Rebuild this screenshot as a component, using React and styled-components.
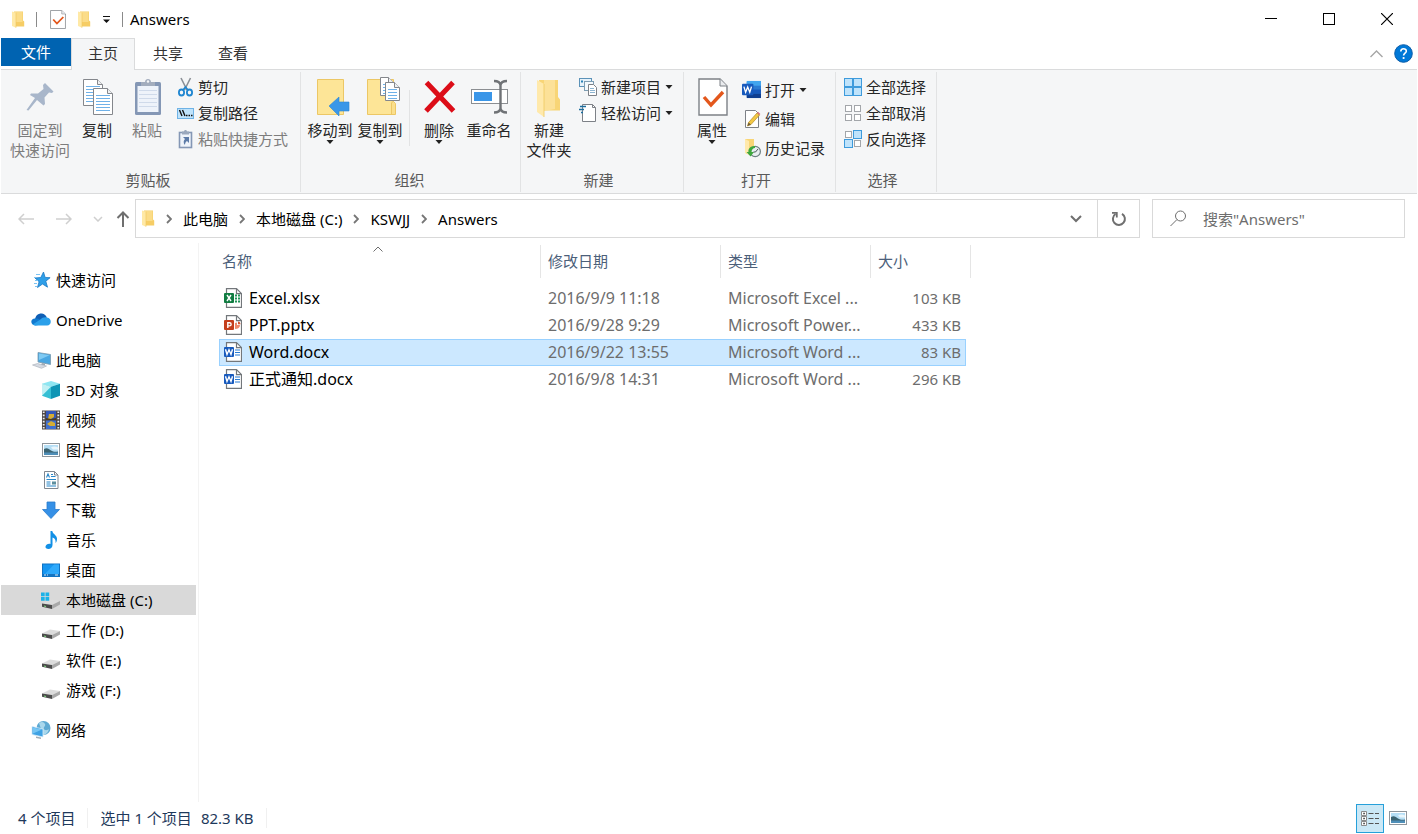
import React from "react";
import styled, { createGlobalStyle, css } from "styled-components";

const GlobalStyle = createGlobalStyle`
  :root {
    --color-text: #000;
    --color-ribbon: #f5f6f7;
    --color-line: #dadbdc;
    --color-separator: #e2e3e4;
    --color-accent: #0063b1;
    --color-muted: #6d6d6d;
    --color-header: #4c607a;
    --color-disabled: #7d7d7d;
  }

  * {
    box-sizing: border-box;
  }

  body {
    margin: 0;
    background: #fff;
    color: var(--color-text);
  }

  body,
  button,
  input {
    font-family: "Noto Sans", "Noto Sans CJK SC", sans-serif;
    font-size: 15px;
    line-height: 20px;
  }

  button {
    margin: 0;
    padding: 0;
    border: 0;
    background: none;
    color: inherit;
  }

  svg {
    display: block;
    flex-shrink: 0;
  }
`;

const Window = styled.div`
  min-height: 100vh;
  display: flex;
  flex-direction: column;
  padding: 0 1px;
`;

/* ---------- title bar ---------- */

const TitleBar = styled.header`
  display: flex;
  height: 38px;
  align-items: center;
  padding: 0 1px 0 10px;
`;

const QuickAccess = styled.div`
  display: flex;
  align-items: center;
  gap: 11px;

  button {
    display: flex;
  }
`;

const TitleRule = styled.span`
  width: 1px;
  height: 15px;
  margin-right: 2px;
  background: #8a8a8a;
`;

const Title = styled.h1`
  flex: 1;
  margin: 0 0 0 5px;
  font-size: 15px;
  font-weight: 400;
`;

const CaptionButton = styled.button`
  width: 58px;
  height: 38px;
  display: flex;
  align-items: center;
  justify-content: center;
`;

/* ---------- tabs ---------- */

const TabBar = styled.nav`
  display: flex;
  height: 32px;
  border-bottom: 1px solid var(--color-line);
`;

const FileTab = styled.button`
  height: 28px;
  padding: 0 20px;
  background: var(--color-accent);
  color: #fff;
`;

const Tab = styled.button`
  height: 32px;
  padding: 0 16px 3px;
  border: 1px solid transparent;
  border-bottom: 0;
  color: #333;

  & + & {
    margin-left: 1px;
  }

  ${({ $active }) =>
    $active &&
    css`
      border-color: var(--color-line);
      background: var(--color-ribbon);
    `}
`;

const TabTools = styled.div`
  display: flex;
  align-items: center;
  gap: 11px;
  margin-left: auto;
  padding-right: 4px;

  button {
    display: flex;
  }
`;

/* ---------- ribbon ---------- */

const Ribbon = styled.div`
  display: flex;
  padding: 2px 0 1px;
  background: var(--color-ribbon);
  border-bottom: 1px solid var(--color-line);
`;

const Group = styled.section`
  display: flex;
  flex-direction: column;
  height: 120px;
  padding-bottom: 2px;
  padding-left: ${({ $lead }) => $lead || 3}px;
  padding-right: ${({ $tail }) => $tail || 10}px;
  border-right: 1px solid var(--color-separator);
`;

const GroupBody = styled.div`
  display: flex;
  flex: 1;
`;

const GroupLabel = styled.h2`
  margin: 0;
  font-size: 15px;
  font-weight: 400;
  text-align: center;
  color: #5a5a5a;
`;

const BigButton = styled.button`
  display: flex;
  flex-direction: column;
  align-items: center;
  min-width: 50px;
  padding: 5px 2px 0;
  color: #262626;

  > svg:first-child {
    margin-bottom: 3px;
  }

  &:disabled {
    color: var(--color-disabled);
  }
`;

const SmallColumn = styled.div`
  display: flex;
  flex-direction: column;
  padding: ${({ $tall }) => ($tall ? 3 : 2)}px 0 0 5px;
`;

const SmallButton = styled.button`
  display: flex;
  align-items: center;
  gap: 4px;
  height: ${({ $tall }) => ($tall ? 29 : 26)}px;
  color: #262626;

  &:disabled {
    color: var(--color-disabled);
  }
`;

const InnerRule = styled.span`
  width: 1px;
  height: 56px;
  margin: 18px 4px 0;
  background: var(--color-separator);
`;

/* ---------- address bar ---------- */

const NavRow = styled.div`
  display: flex;
  align-items: center;
  padding: 5px 12px 5px 14px;
`;

const NavButtons = styled.div`
  display: flex;
  align-items: center;
  width: 120px;
`;

const NavButton = styled.button`
  display: flex;
  justify-content: center;
  width: ${({ $narrow }) => ($narrow ? 14 : 22)}px;
  margin-right: ${({ $narrow }) => ($narrow ? 7 : 16)}px;

  &:last-child {
    margin-right: 0;
  }
`;

const AddressBox = styled.div`
  display: flex;
  flex: 1;
  height: 39px;
  border: 1px solid #d9d9d9;
`;

const Crumbs = styled.ol`
  display: flex;
  flex: 1;
  align-items: center;
  margin: 0;
  padding: 0 0 0 5px;
  list-style: none;

  li {
    display: flex;
    align-items: center;
  }

  li > svg {
    margin: 0 11px;
  }

  a {
    color: inherit;
    text-decoration: none;
  }
`;

const AddressButton = styled.button`
  width: 42px;
  display: flex;
  align-items: center;
  justify-content: center;
  border-left: ${({ $ruled }) => ($ruled ? "1px solid #d9d9d9" : "0")};
`;

const SearchBox = styled.label`
  display: flex;
  align-items: center;
  gap: 16px;
  width: 253px;
  height: 39px;
  margin-left: 12px;
  padding-left: 17px;
  border: 1px solid #d9d9d9;

  input {
    flex: 1;
    min-width: 0;
    padding: 0;
    border: 0;
    outline: 0;
    background: none;
  }

  input::placeholder {
    color: var(--color-muted);
    opacity: 1;
  }
`;

/* ---------- body ---------- */

const Content = styled.div`
  display: flex;
  flex: 1;
`;

const Sidebar = styled.nav`
  width: 198px;
  padding: 22px 2px 0 0;
  border-right: 1px solid #f3f3f3;
`;

const Branch = styled.ul`
  margin: 0 0 10px;
  padding: 0;
  list-style: none;
`;

const TreeLink = styled.a`
  display: flex;
  align-items: center;
  gap: 5px;
  height: 30px;
  padding-left: ${({ $child }) => ($child ? 40 : 30)}px;
  background: ${({ $selected }) => ($selected ? "#d9d9d9" : "none")};
  color: inherit;
  text-decoration: none;
`;

const FileArea = styled.main`
  flex: 1;
  padding: 2px 0 0 20px;
`;

const FileTable = styled.table`
  width: 752px;
  table-layout: fixed;
  border-collapse: separate;
  border-spacing: 0;

  th {
    position: relative;
    height: 33px;
    padding: 0 7px 2px;
    border-right: 1px solid #e5e5e5;
    font-weight: 400;
    text-align: left;
    color: var(--color-header);
  }

  th:first-child {
    padding-left: 3px;
  }

  tbody::before {
    content: "";
    display: block;
    height: 7px;
  }
`;

const SortMark = styled.span`
  position: absolute;
  top: 1px;
  left: 50%;
  margin-left: -7px;
`;

const FileRow = styled.tr`
  td {
    height: 27px;
    padding: 0 0 2px 7px;
    font-size: 16px;
    color: var(--color-muted);
    white-space: nowrap;
  }

  td:first-child {
    padding-left: 5px;
    color: #000;
  }

  td:nth-child(4) {
    padding-right: 5px;
    font-size: 15px;
    text-align: right;
  }

  ${({ $selected }) =>
    $selected &&
    css`
      td:not(:last-child) {
        background: #cce8ff;
        box-shadow: inset 0 1px #99d1ff, inset 0 -1px #99d1ff;
      }

      td:first-child {
        box-shadow: inset 1px 1px #99d1ff, inset 0 -1px #99d1ff;
      }

      td:nth-child(4) {
        box-shadow: inset -1px 1px #99d1ff, inset 0 -1px #99d1ff;
      }
    `}
`;

const FileName = styled.span`
  display: flex;
  align-items: center;
  gap: 7px;
`;

/* ---------- status bar ---------- */

const StatusBar = styled.footer`
  display: flex;
  align-items: center;
  height: 32px;
  padding: 0 5px 0 17px;
  color: #1e395b;
`;

const StatusItem = styled.span`
  display: flex;
  gap: 9px;
  padding-right: 12px;
  margin-right: 12px;
  border-right: 1px solid #f0f0f0;
`;

const ViewSwitch = styled.div`
  display: flex;
  margin-left: auto;
`;

const ViewButton = styled.button`
  display: flex;
  align-items: center;
  justify-content: center;
  width: 28px;
  height: 29px;
  border: 1px solid ${({ $active }) => ($active ? "#26a0da" : "transparent")};
  background: ${({ $active }) => ($active ? "#cbe8f6" : "none")};
`;

/* ---------- icons ---------- */

function Caret() {
  return (
    <svg width="8" height="4" viewBox="0 0 8 4">
      <path d="M0.5 0h7L4 4z" fill="#222" />
    </svg>
  );
}

function Chevron() {
  return (
    <svg width="6" height="10" viewBox="0 0 6 10">
      <path d="M1 1l4 4-4 4" fill="none" stroke="#767676" strokeWidth="1.8" />
    </svg>
  );
}

function Folder() {
  return (
    <svg width="14" height="17" viewBox="0 0 14 17">
      <path d="M3 0.5h9v9l1.2 1v5H3z" fill="#f6cd65" />
      <path d="M4 1h7.5v10H4z" fill="#fbdc88" />
      <path d="M1 0.5l4 1.2v15L1 15z" fill="#ffe9a6" />
      <path d="M5 1.7v15" stroke="#f0c65c" strokeWidth="0.6" />
    </svg>
  );
}

function CheckPage({ width = 16, height = 19 }) {
  return (
    <svg width={width} height={height} viewBox="0 0 30 38" preserveAspectRatio="none">
      <path d="M1 1h21l7 7v29H1z" fill="#fff" stroke="#7d8187" strokeWidth="1.4" />
      <path d="M22 1v7h7" fill="#e9ebee" stroke="#7d8187" strokeWidth="1" />
      <path d="M6 19l7 8L25 14" fill="none" stroke="#e3571c" strokeWidth="3.4" />
    </svg>
  );
}

function PinIcon() {
  return (
    <svg width="40" height="40" viewBox="0 0 40 40">
      <path
        d="M25 6l8.5 8.5-1.5 1.5-3-0.5-4.5 5 0.5 6.5-1.5 1.5-6.5-5.5L8.5 33.5 6.5 33l8.5-12-5-3 1-1.5h7l5.5-4.500-0.500-4z"
        fill="#a8b6ca"
      />
    </svg>
  );
}

function Sheet({ x, y, w = 20, h = 27 }) {
  const lines = [];
  for (let i = y + 7; i < y + h - 2; i += 3) lines.push(i);
  return (
    <g>
      <path
        d={`M${x + 0.5} ${y + 0.5}h${w - 6}l5 5v${h - 6}h-${w - 1}z`}
        fill="#fff"
        stroke="#84878c"
      />
      <path d={`M${x + w - 5.5} ${y + 0.5}v5h5`} fill="#eef0f2" stroke="#84878c" />
      {lines.map((i) => (
        <path key={i} d={`M${x + 3} ${i + 0.5}h${w - 6}`} stroke="#6fb1e8" />
      ))}
    </g>
  );
}

function CopyIcon() {
  return (
    <svg width="40" height="40" viewBox="0 0 40 40">
      <Sheet x={6} y={2} />
      <Sheet x={16} y={11} />
    </svg>
  );
}

function PasteIcon() {
  return (
    <svg width="40" height="40" viewBox="0 0 40 40">
      <rect x="8" y="5" width="26" height="33" rx="1.5" fill="#8497b5" />
      <rect x="10.5" y="9" width="21" height="26" fill="#eef3fa" />
      <path
        d="M12 13.5h18M12 17.5h18M12 21.5h18M12 25.5h18M12 29.5h18"
        stroke="#cfdaea"
      />
      <path d="M14 5h4c0-4 6-4 6 0h4v4H14z" fill="#a3adbd" />
      <circle cx="21" cy="4.5" r="1.2" fill="#f5f6f7" />
    </svg>
  );
}

function MoveToIcon() {
  return (
    <svg width="40" height="40" viewBox="0 0 40 40">
      <path d="M7.5 2.5h26v35h-26z" fill="#fde597" stroke="#ecc765" />
      <path d="M19 29l10-9v5h10v9H29v5z" fill="#3b97e8" stroke="#2d86d3" strokeWidth="0.6" />
    </svg>
  );
}

function CopyToIcon() {
  return (
    <svg width="40" height="40" viewBox="0 0 40 40">
      <path d="M7.500 2.500h26v22l2 2v11h-28z" fill="#fbdf8c" stroke="#ecc765" />
      <path d="M8 3h23v34H8z" fill="#fde597" />
      <path d="M31.500 37V26l2-2" fill="none" stroke="#ecc765" />
      <Sheet x={20} y={0} w={14} h={19} />
      <Sheet x={25} y={5} w={15} h={19} />
    </svg>
  );
}

function DeleteIcon() {
  return (
    <svg width="40" height="40" viewBox="0 0 40 40">
      <path
        d="M7.5 5.5L34.5 34M34 5.500L7 34"
        fill="none"
        stroke="#dc0d18"
        strokeWidth="5"
      />
    </svg>
  );
}

function RenameIcon() {
  return (
    <svg width="40" height="40" viewBox="0 0 40 40">
      <rect x="2.5" y="12.5" width="36" height="14" fill="#fff" stroke="#8b8e92" />
      <rect x="5" y="15" width="18" height="9" fill="#3a96e8" />
      <path
        d="M25 4c4 0 6 1 6.500 4 0.500-3 2.500-4 6.500-4M31.500 6v28M25 35.500c4 0 6-1 6.500-4 0.500 3 2.500 4 6.500 4"
        fill="none"
        stroke="#6f7276"
        strokeWidth="2.4"
      />
    </svg>
  );
}

function NewFolderIcon() {
  return (
    <svg width="40" height="40" viewBox="0 0 40 40">
      <path d="M10 3h19v17l2 2.500v11H13z" fill="#f8d576" />
      <path d="M15 3h11v29l-11 2z" fill="#fce198" />
      <path d="M8 3l7 4v33l-7-5z" fill="#ffe9ab" />
      <path d="M15 7v33" stroke="#efc961" strokeWidth="0.8" />
    </svg>
  );
}

function ScissorsIcon() {
  return (
    <svg width="17" height="20" viewBox="0 0 17 20">
      <path d="M4 1l6 12M13.500 1l-6 12" stroke="#8c9197" strokeWidth="1.6" />
      <ellipse cx="4.5" cy="15.5" rx="2.6" ry="3" fill="none" stroke="#1f86d1" strokeWidth="1.8" />
      <ellipse cx="12.5" cy="15.5" rx="2.6" ry="3" fill="none" stroke="#1f86d1" strokeWidth="1.8" />
      <path d="M6 13l2.500-3 2.500 3" fill="none" stroke="#1f86d1" strokeWidth="1.6" />
    </svg>
  );
}

function PathIcon() {
  return (
    <svg width="17" height="20" viewBox="0 0 17 20">
      <rect x="0.5" y="5.5" width="16" height="10" fill="#bfe3fb" stroke="#6fb3e6" />
      <path d="M2.500 7l2.500 6M5.500 7l2.500 6" stroke="#111" strokeWidth="1.4" />
      <path d="M9 12.500h1.500M11.500 12.500H13M14 12.500h1.500" stroke="#111" strokeWidth="1.4" />
    </svg>
  );
}

function PasteShortcutIcon() {
  return (
    <svg width="17" height="20" viewBox="0 0 17 20">
      <rect x="2.5" y="3.5" width="12" height="15" fill="#eef3fa" stroke="#8497b5" strokeWidth="1.6" />
      <path d="M5 2.500h2c0-2 3-2 3 0h2v3H5z" fill="#9aa8bd" />
      <path d="M6 8h6v6l-2-2c-1.500 1-2 2.500-2 4-2-2-1.500-4.500 0-6z" fill="#5c7ba8" />
    </svg>
  );
}

function NewItemIcon() {
  return (
    <svg width="18" height="20" viewBox="0 0 18 20">
      <rect x="0.5" y="1.5" width="12" height="8" fill="#e6f2fb" stroke="#5b92b8" />
      <path d="M2 3.500h2v2H2z" fill="#2a82b8" />
      <rect x="5.5" y="4.5" width="9" height="9" fill="#f4f9fd" stroke="#7d9db3" />
      <path d="M9.500 7.500h5l3 3v8h-8z" fill="#fff" stroke="#7d8187" />
      <path d="M11 11.500h4M11 13.500h5M11 15.500h5" stroke="#8db4d0" />
    </svg>
  );
}

function EasyAccessIcon() {
  return (
    <svg width="18" height="20" viewBox="0 0 18 20">
      <path d="M3.500 1.500h10l3 3v14h-13z" fill="#fff" stroke="#7d8187" />
      <path d="M13.500 1.500v3h3" fill="none" stroke="#7d8187" />
      <path d="M1 3.500h6M0 6.500h5M2 9.500h2" stroke="#1c6e9e" strokeWidth="1.4" />
    </svg>
  );
}

function WordIcon() {
  return (
    <svg width="19" height="19" viewBox="0 0 20 20">
      <rect x="5" y="1" width="15" height="18" rx="1" fill="#2b7cd3" />
      <path d="M5 1h15v5H5z" fill="#41a5ee" />
      <path d="M5 10h15v4.500H5z" fill="#185abd" />
      <path d="M5 14.500h15V19H5z" fill="#103f91" />
      <rect x="0" y="4" width="12" height="12" rx="1" fill="#185abd" />
      <path d="M2 7l1.800 6L6 7.500 8.200 13 10 7" fill="none" stroke="#fff" strokeWidth="1.4" />
    </svg>
  );
}

function EditIcon() {
  return (
    <svg width="19" height="20" viewBox="0 0 19 20">
      <path d="M3.500 1.500h10l3 3v14h-13z" fill="#fff" stroke="#7d8187" />
      <path d="M5.500 17l1-3.500L15 4l2.500 2-8.500 9.500z" fill="#f3c845" stroke="#b38b22" strokeWidth="0.7" />
      <path d="M5.500 17l1-3.500 2.500 2z" fill="#6b5a3a" />
      <path d="M15 4l1-1.200 2.400 2.200-0.900 1z" fill="#d8707a" />
    </svg>
  );
}

function HistoryIcon() {
  return (
    <svg width="19" height="20" viewBox="0 0 19 20">
      <path d="M3 1h9v15H4z" fill="#f8d576" />
      <path d="M3 1l4 2v14l-4-2z" fill="#ffe9ab" />
      <circle cx="13.2" cy="13.5" r="5.200" fill="#e8eef0" stroke="#6d7f82" strokeWidth="1.2" />
      <path d="M13 8c-5 0-7 3-6.500 6H4.500l4 4.500 3.500-4.500H9.500c0-2 1.500-4 3.500-4z" fill="#3ea73e" />
      <path d="M13.500 14l2.500-3M13.500 14h-2" stroke="#44575a" />
    </svg>
  );
}

const gridFills = {
  all: [1, 1, 1, 1],
  none: [0, 0, 0, 0],
  invert: [0, 1, 1, 0],
};

function GridIcon({ kind }) {
  return (
    <svg width="18" height="18" viewBox="0 0 18 18">
      {gridFills[kind].map((on, i) => {
        const size = on ? 8 : 6;
        const inset = on ? 0.5 : 1.5;
        return (
          <rect
            key={i}
            x={(i % 2) * 9 + inset}
            y={Math.floor(i / 2) * 9 + inset}
            width={size}
            height={size}
            fill={on ? "#bfe3fb" : "#fff"}
            stroke={on ? "#3e9bdc" : "#a3a6aa"}
          />
        );
      })}
    </svg>
  );
}

function OfficeFile({ color, mark, children }) {
  return (
    <svg width="18" height="20" viewBox="0 0 18 20">
      <path d="M2.500 0.700h10l5 5v13.600h-15z" fill="#fff" stroke="#73777b" strokeWidth="1.2" />
      <path d="M12.500 0.700v5h5" fill="none" stroke="#73777b" strokeWidth="1.2" />
      {children}
      <rect x="0" y="5" width="10" height="10" rx="1" fill={color} />
      <path d={mark} fill="none" stroke="#fff" strokeWidth="1.4" />
    </svg>
  );
}

const ExcelFile = () => (
  <OfficeFile color="#107c41" mark="M3 7l4 6M7 7l-4 6">
    <path
      d="M11 7.500h2M14 7.500h2M11 10.500h2M14 10.500h2M11 13.500h2M14 13.500h2"
      stroke="#1e9457"
      strokeWidth="1.8"
    />
  </OfficeFile>
);

const PowerPointFile = () => (
  <OfficeFile color="#c43e1c" mark="M3.800 13V7.700h1.700c2.200 0 2.200 3.200 0 3.200H3.800">
    <path d="M11 8v6c3 0 5-1.500 5-4h-3V7.500z" fill="#ed8a6c" />
    <path d="M14 6.500v2.700h2.500c0-1.500-1-2.700-2.500-2.700z" fill="#d35230" />
  </OfficeFile>
);

const WordFile = () => (
  <OfficeFile color="#185abd" mark="M1.500 7.300l1.500 5.200 2-4.700 2 4.700 1.500-5.200">
    <path d="M11 8h5M11 10.500h5M11 13h5" stroke="#2b7cd3" strokeWidth="1.2" />
  </OfficeFile>
);

function TreeSvg({ children }) {
  return (
    <svg width="20" height="20" viewBox="0 0 20 20">
      {children}
    </svg>
  );
}

const StarIcon = () => (
  <TreeSvg>
    <path
      d="M12.500 2l1.600 5.400 5 0.300-4.300 3.500 1.700 6-5-3.200-5 3.500 1.600-5.800L4 8l5.800-0.500z"
      fill="#2f9fe8"
      stroke="#1b78c4"
      strokeWidth="0.8"
    />
    <path d="M5 4.500h4M3 7.500h2M4 10.500h3M3 13.500h3M4 16.500h2" stroke="#7cc3f2" />
  </TreeSvg>
);

const CloudIcon = () => (
  <TreeSvg>
    <path d="M4 9.500C4.500 5 8 3 11 3.500c2.500 0.400 4 2 4.800 4L10 12z" fill="#0f5fb5" />
    <path d="M4.500 15.500C-1 15-1 8.500 4 8.500c2-0.300 3.500 0.200 5 1.200l6 4z" fill="#1179cf" />
    <path d="M9 9.800c2-2.300 5-3 7-2.200 5 0.400 5 7.900 0 7.900H4.500c-1 0-2-0.400-2.800-1z" fill="#2ba0ea" />
  </TreeSvg>
);

const ComputerIcon = () => (
  <TreeSvg>
    <path d="M7 2.500l12.500 2v10L7 12z" fill="#4aa7e2" stroke="#7a99ad" strokeWidth="0.8" />
    <path d="M8 3.500l10.500 1.700L8 10z" fill="#7fcaf3" />
    <path d="M11 13l3 0.600v2l-4-0.600z" fill="#9fabb5" />
    <path d="M1.500 15l5-1.500 9 2.500-5 2.300z" fill="#d5dae2" stroke="#a4abb6" strokeWidth="0.6" />
  </TreeSvg>
);

const CubeIcon = () => (
  <TreeSvg>
    <path d="M10 1l9 2.800-9 3-9-3z" fill="#8de6f2" />
    <path d="M1 3.800l9 3V19l-9-3.200z" fill="#35bfd4" />
    <path d="M1 3.800l9 3L1 15.800z" fill="#c0f0f4" />
    <path d="M19 3.800l-9 3V19l9-3.200z" fill="#0e95b5" />
  </TreeSvg>
);

const FilmIcon = () => (
  <TreeSvg>
    <rect x="1" y="0.5" width="18" height="19" fill="#4d4746" />
    <path d="M2.700 1.500v17M17.300 1.500v17" stroke="#eee" strokeWidth="1.8" strokeDasharray="1.6 1.5" />
    <rect x="5" y="1" width="10" height="8.5" fill="#3558b8" />
    <rect x="5" y="10.5" width="10" height="8.5" fill="#3f6fd0" />
    <path d="M8 4h5v3l-3 2H7zM6 14l4-3 4 2v3H9z" fill="#d6ad34" />
    <path d="M5 8l5 1 5-1v2H5z" fill="#4b3c1e" />
  </TreeSvg>
);

const PictureIcon = () => (
  <TreeSvg>
    <rect x="1.5" y="3.5" width="17" height="13" fill="#fff" stroke="#8f969c" />
    <rect x="3" y="5" width="14" height="10" fill="#b5def5" />
    <path d="M3 9c3-2 5 0 7 1.500s5 1.500 7 1v1.500H3z" fill="#3c6472" />
    <path d="M3 12.500h14V15H3z" fill="#4f8fb8" />
    <path d="M10 7.500c2-1.500 5-1 7 0v2h-5z" fill="#e9f6fc" />
  </TreeSvg>
);

const DocumentIcon = () => (
  <TreeSvg>
    <path d="M3.500 1.500h10l3.500 3.500v13.500H3.500z" fill="#fff" stroke="#808790" />
    <path d="M13.500 1.500V5H17" fill="none" stroke="#808790" />
    <path
      d="M5.500 7.500l1.500-3.500 1.500 3.500M10 4.500h2M10 6.500h4.500M5.500 9.500h9.500M5.500 12h4M5.500 14h4M5.500 16h9.500"
      stroke="#2987c9"
      strokeWidth="1.1"
      fill="none"
    />
    <rect x="11" y="11.5" width="4" height="3" fill="#5e8f9e" />
  </TreeSvg>
);

const DownloadIcon = () => (
  <TreeSvg>
    <path d="M6 2h8v7.500h4.500L10 18.500 1.500 9.500H6z" fill="#3590e6" stroke="#2a7bcb" strokeWidth="0.8" />
  </TreeSvg>
);

const MusicIcon = () => (
  <TreeSvg>
    <path
      d="M9.500 1h1.800c0.300 3 4.500 4 4.700 7.500 0 2-0.500 3.500-1.500 4.500 0.500-3-0.500-4.500-3-5.500V15c0 2.500-2 4-4 4s-3.300-1-3-2.500c0.300-2 3-3.300 5-2.500z"
      fill="#1290e6"
    />
  </TreeSvg>
);

const DesktopIcon = () => (
  <TreeSvg>
    <rect x="1.5" y="4" width="17" height="12.5" fill="#1695f0" stroke="#0f73c4" />
    <path d="M2 16L13 4.500h5V16z" fill="#2ea9fb" />
    <path d="M2 15h16" stroke="#0b5ea8" strokeWidth="1.4" />
    <path d="M3 15h2M6 15h1M14 15h3" stroke="#d8eefc" />
  </TreeSvg>
);

const DriveShape = () => (
  <g>
    <path d="M1 13.500l8-4 10 1.500-8 4z" fill="#dcdcdc" />
    <path d="M1 13.500l10 1.500v4l-10-2.300z" fill="#4b4b4b" />
    <path d="M11 15l8-4v3.500l-8 4.500z" fill="#a9a9a9" />
    <path d="M3 16l2 0.500" stroke="#7fe07f" />
  </g>
);

const DriveIcon = () => (
  <TreeSvg>
    <DriveShape />
  </TreeSvg>
);

const SystemDriveIcon = () => (
  <TreeSvg>
    <DriveShape />
    <path
      d="M0 2.500h3.700v3.700H0zM4.500 2.500h3.700v3.700H4.500zM0 7h3.700v3.700H0zM4.500 7h3.700v3.700H4.500z"
      fill="#1ab2e8"
    />
  </TreeSvg>
);

const NetworkIcon = () => (
  <TreeSvg>
    <circle cx="12.5" cy="8" r="7" fill="#5ea9d2" />
    <path d="M8 3c3-2 5-1 6 1s-2 3-1 5 4 1 5 0c-1 4-4 6-6 6z" fill="#a9d7ec" />
    <path d="M1 6.500l11 2.500v8L1 14.500z" fill="#3fa2e4" stroke="#d7ebf7" strokeWidth="0.8" />
    <path d="M2 7.500l9 2-9 4z" fill="#76c5f3" />
    <path d="M5 16.500l5 1v1.500l-5-1z" fill="#a2acb5" />
  </TreeSvg>
);

/* ---------- data ---------- */

const tree = [
  [{ label: "快速访问", icon: StarIcon }],
  [{ label: "OneDrive", icon: CloudIcon }],
  [
    { label: "此电脑", icon: ComputerIcon },
    { label: "3D 对象", icon: CubeIcon, child: true },
    { label: "视频", icon: FilmIcon, child: true },
    { label: "图片", icon: PictureIcon, child: true },
    { label: "文档", icon: DocumentIcon, child: true },
    { label: "下载", icon: DownloadIcon, child: true },
    { label: "音乐", icon: MusicIcon, child: true },
    { label: "桌面", icon: DesktopIcon, child: true },
    { label: "本地磁盘 (C:)", icon: SystemDriveIcon, child: true, selected: true },
    { label: "工作 (D:)", icon: DriveIcon, child: true },
    { label: "软件 (E:)", icon: DriveIcon, child: true },
    { label: "游戏 (F:)", icon: DriveIcon, child: true },
  ],
  [{ label: "网络", icon: NetworkIcon }],
];

const files = [
  { name: "Excel.xlsx", icon: ExcelFile, date: "2016/9/9 11:18", type: "Microsoft Excel ...", size: "103 KB" },
  { name: "PPT.pptx", icon: PowerPointFile, date: "2016/9/28 9:29", type: "Microsoft Power...", size: "433 KB" },
  { name: "Word.docx", icon: WordFile, date: "2016/9/22 13:55", type: "Microsoft Word ...", size: "83 KB", selected: true },
  { name: "正式通知.docx", icon: WordFile, date: "2016/9/8 14:31", type: "Microsoft Word ...", size: "296 KB" },
];

const crumbs = ["此电脑", "本地磁盘 (C:)", "KSWJJ", "Answers"];

/* ---------- sections ---------- */

function Header() {
  return (
    <TitleBar>
      <QuickAccess>
        <Folder />
        <TitleRule />
        <button aria-label="属性">
          <CheckPage />
        </button>
        <button aria-label="新建文件夹">
          <Folder />
        </button>
        <button aria-label="自定义快速访问工具栏">
          <svg width="9" height="9" viewBox="0 0 9 9">
            <path d="M1 1.500h7" stroke="#111" />
            <path d="M1 4.500h7L4.500 8z" fill="#111" />
          </svg>
        </button>
        <TitleRule />
      </QuickAccess>
      <Title>Answers</Title>
      <CaptionButton aria-label="最小化">
        <svg width="12" height="12" viewBox="0 0 12 12">
          <path d="M0 5.500h12" stroke="#000" />
        </svg>
      </CaptionButton>
      <CaptionButton aria-label="最大化">
        <svg width="12" height="12" viewBox="0 0 12 12">
          <rect x="0.5" y="0.5" width="11" height="11" fill="none" stroke="#000" />
        </svg>
      </CaptionButton>
      <CaptionButton aria-label="关闭">
        <svg width="12" height="12" viewBox="0 0 12 12">
          <path d="M0 0l12 12M12 0L0 12" stroke="#000" strokeWidth="1.2" />
        </svg>
      </CaptionButton>
    </TitleBar>
  );
}

function Tabs() {
  return (
    <TabBar>
      <FileTab>文件</FileTab>
      <Tab $active>主页</Tab>
      <Tab>共享</Tab>
      <Tab>查看</Tab>
      <TabTools>
        <button aria-label="最小化功能区">
          <svg width="13" height="8" viewBox="0 0 13 8">
            <path d="M0.500 7l6-6 6 6" fill="none" stroke="#a6a6a6" strokeWidth="1.4" />
          </svg>
        </button>
        <button aria-label="帮助">
          <svg width="19" height="19" viewBox="0 0 19 19">
            <circle cx="9.5" cy="9.5" r="8.8" fill="#0078d7" stroke="#0a5ca8" />
            <path
              d="M6.800 7.500c0-3.800 5.700-3.500 5.500-0.300-0.100 2-2.700 2-2.700 4.300"
              fill="none"
              stroke="#fff"
              strokeWidth="1.6"
            />
            <circle cx="9.6" cy="14" r="1.1" fill="#fff" />
          </svg>
        </button>
      </TabTools>
    </TabBar>
  );
}

function RibbonBar() {
  return (
    <Ribbon>
      <Group $lead={7} $tail={12}>
        <GroupBody>
          <BigButton disabled>
            <PinIcon />
            <span>固定到</span>
            <span>快速访问</span>
          </BigButton>
          <BigButton>
            <CopyIcon />
            复制
          </BigButton>
          <BigButton disabled>
            <PasteIcon />
            粘贴
          </BigButton>
          <SmallColumn>
            <SmallButton>
              <ScissorsIcon />
              剪切
            </SmallButton>
            <SmallButton>
              <PathIcon />
              复制路径
            </SmallButton>
            <SmallButton disabled>
              <PasteShortcutIcon />
              粘贴快捷方式
            </SmallButton>
          </SmallColumn>
        </GroupBody>
        <GroupLabel>剪贴板</GroupLabel>
      </Group>
      <Group $lead={4} $tail={6}>
        <GroupBody>
          <BigButton>
            <MoveToIcon />
            移动到
            <Caret />
          </BigButton>
          <BigButton>
            <CopyToIcon />
            复制到
            <Caret />
          </BigButton>
          <InnerRule />
          <BigButton>
            <DeleteIcon />
            删除
            <Caret />
          </BigButton>
          <BigButton>
            <RenameIcon />
            重命名
          </BigButton>
        </GroupBody>
        <GroupLabel>组织</GroupLabel>
      </Group>
      <Group>
        <GroupBody>
          <BigButton>
            <NewFolderIcon />
            <span>新建</span>
            <span>文件夹</span>
          </BigButton>
          <SmallColumn>
            <SmallButton>
              <NewItemIcon />
              新建项目
              <Caret />
            </SmallButton>
            <SmallButton>
              <EasyAccessIcon />
              轻松访问
              <Caret />
            </SmallButton>
          </SmallColumn>
        </GroupBody>
        <GroupLabel>新建</GroupLabel>
      </Group>
      <Group>
        <GroupBody>
          <BigButton>
            <svg width="40" height="40" viewBox="-6 -1 40 40">
              <CheckPage width={30} height={38} />
            </svg>
            属性
            <Caret />
          </BigButton>
          <SmallColumn $tall>
            <SmallButton $tall>
              <WordIcon />
              打开
              <Caret />
            </SmallButton>
            <SmallButton $tall>
              <EditIcon />
              编辑
            </SmallButton>
            <SmallButton $tall>
              <HistoryIcon />
              历史记录
            </SmallButton>
          </SmallColumn>
        </GroupBody>
        <GroupLabel>打开</GroupLabel>
      </Group>
      <Group>
        <GroupBody>
          <SmallColumn>
            <SmallButton>
              <GridIcon kind="all" />
              全部选择
            </SmallButton>
            <SmallButton>
              <GridIcon kind="none" />
              全部取消
            </SmallButton>
            <SmallButton>
              <GridIcon kind="invert" />
              反向选择
            </SmallButton>
          </SmallColumn>
        </GroupBody>
        <GroupLabel>选择</GroupLabel>
      </Group>
    </Ribbon>
  );
}

function AddressRow() {
  return (
    <NavRow>
      <NavButtons>
        <NavButton aria-label="后退">
          <svg width="16" height="12" viewBox="0 0 16 12">
            <path d="M16 6H1.500M6 1L1 6l5 5" fill="none" stroke="#cfcfcf" strokeWidth="1.5" />
          </svg>
        </NavButton>
        <NavButton aria-label="前进">
          <svg width="16" height="12" viewBox="0 0 16 12">
            <path d="M0 6h14.500M10 1l5 5-5 5" fill="none" stroke="#cfcfcf" strokeWidth="1.5" />
          </svg>
        </NavButton>
        <NavButton aria-label="最近浏览的位置" $narrow>
          <svg width="10" height="6" viewBox="0 0 10 6">
            <path d="M1 1l4 4 4-4" fill="none" stroke="#cfcfcf" strokeWidth="1.5" />
          </svg>
        </NavButton>
        <NavButton aria-label="上移">
          <svg width="14" height="16" viewBox="0 0 14 16">
            <path d="M7 16V1.500M1.500 7L7 1.500 12.500 7" fill="none" stroke="#6f6f6f" strokeWidth="2" />
          </svg>
        </NavButton>
      </NavButtons>
      <AddressBox>
        <Crumbs>
          <Folder />
          {crumbs.map((crumb) => (
            <li key={crumb}>
              <Chevron />
              <a href="#">{crumb}</a>
            </li>
          ))}
        </Crumbs>
        <AddressButton aria-label="以前的位置">
          <svg width="12" height="8" viewBox="0 0 12 8">
            <path d="M1 1l5 5 5-5" fill="none" stroke="#6f6f6f" strokeWidth="2" />
          </svg>
        </AddressButton>
        <AddressButton aria-label="刷新" $ruled>
          <svg width="16" height="16" viewBox="0 0 16 16">
            <path d="M4.500 3A6 6 0 1 0 11 2.800" fill="none" stroke="#6f6f6f" strokeWidth="2" />
            <path d="M1 1.800h4.800v4.700" fill="none" stroke="#6f6f6f" strokeWidth="1.8" />
          </svg>
        </AddressButton>
      </AddressBox>
      <SearchBox>
        <svg width="17" height="17" viewBox="0 0 17 17">
          <circle cx="10.5" cy="6" r="5" fill="none" stroke="#6d6d6d" />
          <path d="M7 9.500L0.500 16" stroke="#6d6d6d" />
        </svg>
        <input type="text" aria-label="搜索" placeholder={'搜索"Answers"'} />
      </SearchBox>
    </NavRow>
  );
}

function Tree() {
  return (
    <Sidebar>
      {tree.map((branch) => (
        <Branch key={branch[0].label}>
          {branch.map(({ label, icon: Icon, child, selected }) => (
            <li key={label}>
              <TreeLink href="#" $child={child} $selected={selected}>
                <Icon />
                {label}
              </TreeLink>
            </li>
          ))}
        </Branch>
      ))}
    </Sidebar>
  );
}

function FileList() {
  return (
    <FileArea>
      <FileTable>
        <colgroup>
          <col width="322" />
          <col width="180" />
          <col width="150" />
          <col width="95" />
          <col width="5" />
        </colgroup>
        <thead>
          <tr>
            <th>
              名称
              <SortMark>
                <svg width="10" height="6" viewBox="0 0 10 6">
                  <path d="M0.500 5.500L5 1l4.500 4.500" fill="none" stroke="#6d6d6d" />
                </svg>
              </SortMark>
            </th>
            <th>修改日期</th>
            <th>类型</th>
            <th colSpan="2">大小</th>
          </tr>
        </thead>
        <tbody>
          {files.map(({ name, icon: Icon, date, type, size, selected }) => (
            <FileRow key={name} $selected={selected}>
              <td>
                <FileName>
                  <Icon />
                  {name}
                </FileName>
              </td>
              <td>{date}</td>
              <td>{type}</td>
              <td>{size}</td>
              <td />
            </FileRow>
          ))}
        </tbody>
      </FileTable>
    </FileArea>
  );
}

function Status() {
  return (
    <StatusBar>
      <StatusItem>4 个项目</StatusItem>
      <StatusItem>
        <span>选中 1 个项目</span>
        <span>82.3 KB</span>
      </StatusItem>
      <ViewSwitch>
        <ViewButton aria-label="详细信息" $active>
          <svg width="20" height="17" viewBox="0 0 20 17">
            <path d="M1.500 1.500h5v4h-5zM1.500 6.500h5v4h-5zM1.500 11.500h5v4h-5z" fill="#fff" stroke="#8b8b8b" />
            <path d="M3.300 3.500h1.500M3.300 8.500h1.500M3.300 13.500h1.500" stroke="#333" strokeWidth="1.5" />
            <path d="M8.500 3.500h5M15 3.500h4M8.500 8.500h5M15 8.500h4M8.500 13.500h5M15 13.500h4" stroke="#555" />
          </svg>
        </ViewButton>
        <ViewButton aria-label="大缩略图">
          <PictureIcon />
        </ViewButton>
      </ViewSwitch>
    </StatusBar>
  );
}

function App() {
  return (
    <>
      <GlobalStyle />
      <Window>
        <Header />
        <Tabs />
        <RibbonBar />
        <AddressRow />
        <Content>
          <Tree />
          <FileList />
        </Content>
        <Status />
      </Window>
    </>
  );
}

export default App;
